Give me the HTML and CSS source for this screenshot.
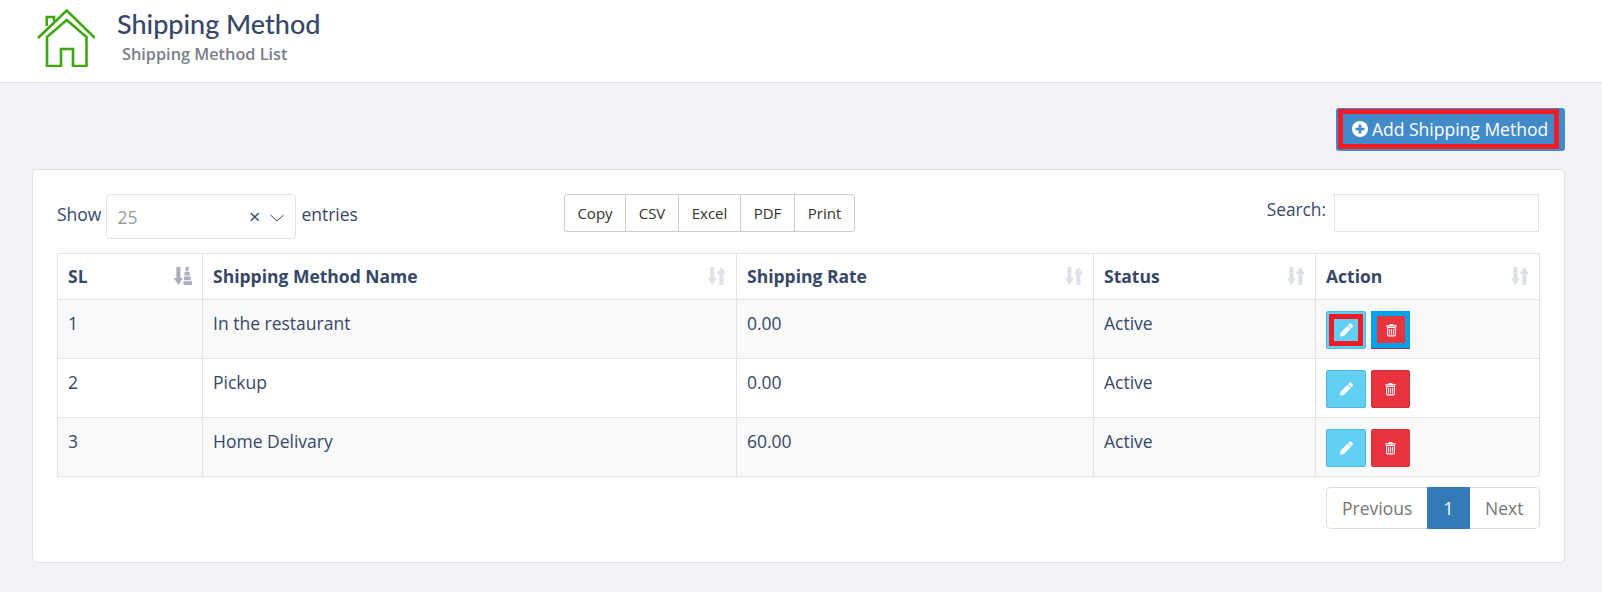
FILE: index.html
```html
<!DOCTYPE html>
<html lang="en">
<head>
    <meta charset="UTF-8">
    <title>Shipping Method</title>
    <link rel="stylesheet" href="styles.css">
</head>
<body>
    <svg class="icon-defs" width="0" height="0">
        <symbol id="i-pencil" viewBox="0 0 512 512"><path d="M497.9 142.1l-46.1 46.1c-4.7 4.7-12.3 4.7-17 0l-111-111c-4.7-4.7-4.7-12.3 0-17l46.1-46.1c18.7-18.7 49.1-18.7 67.9 0l60.1 60.1c18.8 18.7 18.8 49.1 0 67.9zM284.2 99.8L21.6 362.4.4 483.9c-2.9 16.4 11.4 30.6 27.8 27.8l121.5-21.3 262.6-262.6c4.7-4.7 4.7-12.3 0-17l-111-111c-4.8-4.7-12.4-4.7-17.1 0z"/></symbol>
        <symbol id="i-trash" viewBox="0 0 14 16"><path fill-rule="evenodd" d="M1 2.6h3.4L5.2 1h3.6l.8 1.6H13v1.3H1zM2 4.6h10v9.2c0 .9-.6 1.5-1.5 1.5h-7c-.9 0-1.5-.6-1.5-1.5zM3.2 5.8v8.3h7.6V5.800zM4.400 6.800h1v6.300h-1zM6.500 6.800h1v6.300h-1zM8.600 6.800h1v6.300h-1z"/></symbol>
        <symbol id="i-sort" viewBox="0 0 18 18"><path d="M2.400 0h4v11h2.600L4.400 18-.2 11h2.600zM11.400 18V7H8.800L13.400 0 18 7h-2.600v11z"/></symbol>
        <symbol id="i-sort-asc" viewBox="0 0 18 18"><path d="M2.400 0h4v11h2.600L4.400 18-.2 11h2.600zM11.500 0h3.200v3.800h-3.200zM10.500 4.700h5.200v3.800h-5.200zM10 9.400h6.800v3.800H10zM9.500 14.200h8.500V18H9.500z"/></symbol>
    </svg>

    <header class="page-header">
        <svg class="home-icon" viewBox="0 0 58 58" fill="none" stroke="#3fa70f" stroke-width="2.600">
            <path d="M1 29L29.700 1.500 58 29"/>
            <path d="M9.700 17V8H17v4"/>
            <path d="M10 28L29.700 11l19.800 17v29H36V40H24v17H10z"/>
        </svg>
        <div class="titles">
            <h1>Shipping Method</h1>
            <p>Shipping Method List</p>
        </div>
    </header>

    <main class="content">
        <div class="toolbar">
            <a class="add-btn" href="#">
                <span class="add-inner">
                    <svg class="plus" viewBox="0 0 16 16"><circle cx="8" cy="8" r="8" fill="#fff"/><path d="M3.500 6.700h3.200V3.500h2.600v3.200h3.200v2.600H9.300v3.200H6.700V9.300H3.500z" fill="#428bca"/></svg>
                    Add Shipping Method
                </span>
            </a>
        </div>

        <section class="card">
            <div class="table-top">
                <div class="length">
                    <span>Show</span>
                    <div class="select-box">
                        <span class="select-value">25</span>
                        <span class="select-clear">×</span>
                        <svg class="chevron" viewBox="0 0 14 8" fill="none" stroke="#444" stroke-width="1"><path d="M.5 1L7 7l6.500-6"/></svg>
                    </div>
                    <span>entries</span>
                </div>
                <div class="export-btns">
                    <button class="btn-copy">Copy</button>
                    <button class="btn-csv">CSV</button>
                    <button class="btn-excel">Excel</button>
                    <button class="btn-pdf">PDF</button>
                    <button class="btn-print">Print</button>
                </div>
                <div class="search">
                    <label>Search:</label>
                    <input type="text">
                </div>
            </div>

            <table>
                <thead>
                    <tr>
                        <th class="col-sl">SL<svg class="sort active"><use href="#i-sort-asc"/></svg></th>
                        <th class="col-name">Shipping Method Name<svg class="sort"><use href="#i-sort"/></svg></th>
                        <th class="col-rate">Shipping Rate<svg class="sort"><use href="#i-sort"/></svg></th>
                        <th class="col-status">Status<svg class="sort"><use href="#i-sort"/></svg></th>
                        <th class="col-action">Action<svg class="sort"><use href="#i-sort"/></svg></th>
                    </tr>
                </thead>
                <tbody>
                    <tr>
                        <td>1</td>
                        <td>In the restaurant</td>
                        <td>0.00</td>
                        <td>Active</td>
                        <td>
                            <div class="actions">
                                <a class="act edit marked"><span><svg><use href="#i-pencil"/></svg></span></a>
                                <a class="act del marked"><span><svg><use href="#i-trash"/></svg></span></a>
                            </div>
                        </td>
                    </tr>
                    <tr>
                        <td>2</td>
                        <td>Pickup</td>
                        <td>0.00</td>
                        <td>Active</td>
                        <td>
                            <div class="actions">
                                <a class="act edit"><span><svg><use href="#i-pencil"/></svg></span></a>
                                <a class="act del"><span><svg><use href="#i-trash"/></svg></span></a>
                            </div>
                        </td>
                    </tr>
                    <tr>
                        <td>3</td>
                        <td>Home Delivary</td>
                        <td>60.00</td>
                        <td>Active</td>
                        <td>
                            <div class="actions">
                                <a class="act edit"><span><svg><use href="#i-pencil"/></svg></span></a>
                                <a class="act del"><span><svg><use href="#i-trash"/></svg></span></a>
                            </div>
                        </td>
                    </tr>
                </tbody>
            </table>

            <div class="pagination">
                <a class="prev">Previous</a>
                <a class="current">1</a>
                <a class="next">Next</a>
            </div>
        </section>
    </main>
</body>
</html>
```

FILE: styles.css
```css
* {
    box-sizing: border-box;
}
body {
    margin: 0;
    font-family: "Open Sans", Arial, sans-serif;
    font-size: 17.500px;
    color: #374767;
    background-color: #f1f3f6;
}
.icon-defs {
    position: absolute;
}
.page-header {
    display: flex;
    height: 83px;
    padding: 9px 0 0 37px;
    background-color: #fff;
    border-bottom: 1px solid #e1e4ea;
}
.home-icon {
    width: 58px;
    height: 58px;
}
.titles {
    margin-left: 22px;
}
.titles h1 {
    margin: 0;
    font-family: Lato, sans-serif;
    font-size: 27px;
    font-weight: 500;
    line-height: 30px;
    color: #374767;
}
.titles p {
    margin: 5px 0 0 5px;
    font-size: 16.300px;
    font-weight: 600;
    line-height: 20px;
    color: #7a7f8a;
}
.content {
    padding: 25px 37px 0 32px;
}
.toolbar {
    display: flex;
    justify-content: flex-end;
    height: 43px;
    margin-bottom: 18px;
}
.add-btn {
    display: block;
    width: 229px;
    height: 43px;
    padding: 1px 6px 2px 2px;
    background-color: #428bca;
    border-radius: 3px;
    color: #fff;
    text-decoration: none;
}
.add-inner {
    display: flex;
    align-items: center;
    height: 40px;
    padding-left: 9px;
    border: 5px solid #ee1c25;
    white-space: nowrap;
}
.plus {
    width: 16px;
    height: 16px;
    margin-right: 4px;
}
.card {
    height: 394px;
    padding: 24px 25px 0 24px;
    background-color: #fff;
    border: 1px solid #e1e3e6;
    border-radius: 5px;
}
.table-top {
    display: flex;
    height: 59px;
}
.length {
    display: flex;
    align-items: flex-start;
    gap: 5px;
    width: 507px;
    line-height: 40px;
}
.select-box {
    display: flex;
    align-items: center;
    width: 190px;
    height: 45px;
    padding: 0 11px 0 10px;
    border: 1px solid #e1e3e6;
    border-radius: 4px;
    line-height: 43px;
}
.select-value {
    flex: 1;
    color: #999;
    padding-top: 2px;
}
.select-clear {
    margin-right: 10px;
    font-size: 20px;
    color: #374767;
}
.chevron {
    width: 14px;
    height: 8px;
    margin-top: 3px;
}
.export-btns {
    display: flex;
    height: 38px;
    border: 1px solid #ccc;
    border-radius: 3px;
}
.export-btns button {
    padding: 0;
    border: 0;
    border-right: 1px solid #ccc;
    background: none;
    font-family: inherit;
    font-size: 15px;
    color: #333;
}
.btn-copy { width: 61px; }
.btn-csv { width: 53px; }
.btn-excel { width: 62px; }
.btn-pdf { width: 54px; }
.btn-print { width: 59px; }
.export-btns button:last-child {
    border-right: 0;
}
.search {
    display: flex;
    align-items: flex-start;
    gap: 8px;
    margin-left: auto;
    line-height: 32px;
}
.search label {
    font-size: 17.300px;
}
.search input {
    width: 205px;
    height: 38px;
    border: 1px solid #e1e3e6;
}
table {
    width: 100%;
    table-layout: fixed;
    border-collapse: collapse;
    border: 1px solid #e1e3e6;
}
th, td {
    padding: 10px;
    border: 1px solid #e1e3e6;
    text-align: left;
    vertical-align: top;
}
th {
    position: relative;
    height: 46px;
    font-weight: 700;
    line-height: 25px;
}
td {
    height: 59px;
    padding-bottom: 9px;
    line-height: 26px;
}
.col-sl { width: 145px; }
.col-name { width: 534px; }
.col-rate { width: 357px; }
.col-status { width: 222px; }
.col-action { width: 224px; }
tbody tr:nth-child(odd) {
    background-color: #f9f9f9;
}
.sort {
    position: absolute;
    top: 13px;
    right: 10px;
    width: 18px;
    height: 18px;
    fill: #dee1e8;
}
.sort.active {
    fill: #a8afbb;
}
.actions {
    display: flex;
    gap: 5px;
    margin-top: 1px;
}
.act {
    display: block;
    height: 38px;
    border-radius: 2px;
    border: 1px solid;
}
.act span {
    display: flex;
    align-items: center;
    justify-content: center;
    width: 100%;
    height: 100%;
}
.act svg {
    width: 13px;
    height: 14px;
    fill: #fff;
}
.edit {
    width: 40px;
    background-color: #62d0f4;
    border-color: #4cb9dc;
}
.del {
    width: 39px;
    background-color: #e7343f;
    border-color: #c9303a;
}
.edit.marked {
    padding: 2px;
}
.edit.marked span {
    border: 5px solid #ee1c25;
}
.del.marked {
    background-color: #00a2e8;
    border: 0;
    border-bottom: 1px solid #8f3a50;
    padding: 5px 5px 5px 6px;
    border-radius: 0;
}
.del.marked span {
    background-color: #e7343f;
}
.pagination {
    display: flex;
    justify-content: flex-end;
    margin: 10px -1px 0 0;
    line-height: 40px;
}
.pagination a {
    height: 42px;
    border: 1px solid #ddd;
    color: #777;
    background-color: #fff;
}
.pagination .prev {
    width: 101px;
    padding-left: 15px;
    border-right: 0;
    border-radius: 5px 0 0 5px;
}
.pagination .current {
    width: 43px;
    background-color: #337ab7;
    border-color: #337ab7;
    color: #fff;
    text-align: center;
}
.pagination .next {
    width: 70px;
    padding-left: 15px;
    border-left: 0;
    border-radius: 0 5px 5px 0;
}
```
